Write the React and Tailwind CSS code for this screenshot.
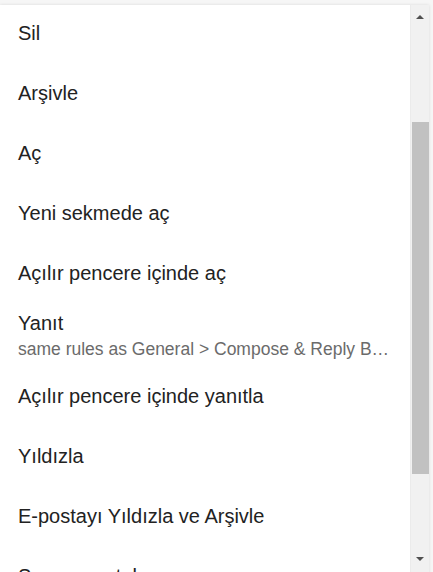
import React from "react";

const items = [
  { t: "Sil" },
  { t: "Arşivle" },
  { t: "Aç" },
  { t: "Yeni sekmede aç" },
  { t: "Açılır pencere içinde aç" },
  { t: "Yanıt", s: "same rules as General > Compose & Reply Behavior" },
  { t: "Açılır pencere içinde yanıtla" },
  { t: "Yıldızla" },
  { t: "E-postayı Yıldızla ve Arşivle" },
  { t: "Sonraya ertele" },
];

export default function App() {
  return (
    <div className="w-[433px] h-[572px] overflow-hidden bg-[#f6f6f6] pt-[5px] pr-[4px] font-['Liberation_Sans',Arial,sans-serif]">
      <div className="flex h-[580px] bg-white shadow-[0_0_3px_rgba(0,0,0,0.12)]">
        <div className="w-[410px] overflow-hidden">
          <div className="-mt-[2px] flex flex-col">
            {items.map((it) =>
              it.s ? (
                <div key={it.t} className="h-[63px] pl-[18px] pr-[18px] pt-[8px] pb-[7px] flex flex-col">
                  <div className="text-[20px] leading-[24px] text-[#222222]">{it.t}</div>
                  <div className="mt-[4px] text-[17.5px] leading-[20px] text-[#6b6b6b] whitespace-nowrap overflow-hidden text-ellipsis">
                    {it.s}
                  </div>
                </div>
              ) : (
                <div key={it.t} className="h-[60px] shrink-0 pl-[18px] pr-[18px] flex items-center">
                  <div className="text-[20px] leading-[24px] text-[#222222] whitespace-nowrap">{it.t}</div>
                </div>
              )
            )}
          </div>
        </div>
        <div className="w-[19px] bg-[#f1f1f1] border-l border-[#ebebeb] flex flex-col items-center">
          <div className="mt-[10px] w-0 h-0 border-l-[4px] border-r-[4px] border-b-[4px] border-l-transparent border-r-transparent border-b-[#505050]" />
          <div className="mt-[103px] w-[17px] h-[352px] bg-[#c1c1c1]" />
          <div className="mt-[83px] w-0 h-0 border-l-[4px] border-r-[4px] border-t-[4px] border-l-transparent border-r-transparent border-t-[#505050]" />
        </div>
      </div>
    </div>
  );
}
